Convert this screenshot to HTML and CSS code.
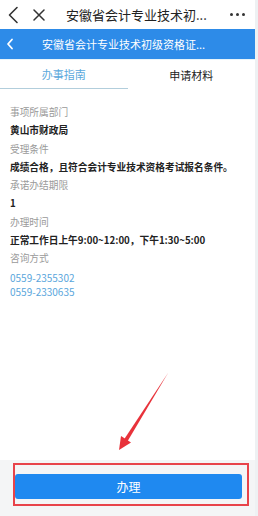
FILE: index.html
```html
<!DOCTYPE html>
<html lang="zh-CN">
<head>
<meta charset="utf-8">
<link rel="stylesheet" href="styles.css">
</head>
<body>
<div class="page">
  <div class="topbar">
    <svg class="ic-back" width="12" height="18" viewBox="0 0 12 18"><path d="M10 1.5 L2.5 9 L10 16.5" fill="none" stroke="#333" stroke-width="1.6" stroke-linecap="round" stroke-linejoin="round"/></svg>
    <svg class="ic-close" width="12" height="12" viewBox="0 0 12 12"><path d="M1 1 L11 11 M11 1 L1 11" fill="none" stroke="#333" stroke-width="1.5" stroke-linecap="round"/></svg>
    <div class="top-title">安徽省会计专业技术初...</div>
    <div class="dots"><span></span><span></span><span></span></div>
  </div>
  <div class="bluebar">
    <svg class="ic-bback" width="8" height="12" viewBox="0 0 8 12"><path d="M6 1.5 L2 6 L6 10.5" fill="none" stroke="#fff" stroke-width="1.8" stroke-linecap="round" stroke-linejoin="round"/></svg>
    <div class="blue-title">安徽省会计专业技术初级资格证...</div>
  </div>
  <div class="tabs">
    <div class="tab active">办事指南</div>
    <div class="tab">申请材料</div>
  </div>
  <div class="content">
    <div class="label">事项所属部门</div>
    <div class="value">黄山市财政局</div>
    <div class="label">受理条件</div>
    <div class="value">成绩合格，且符合会计专业技术资格考试报名条件。</div>
    <div class="label">承诺办结期限</div>
    <div class="value">1</div>
    <div class="label">办理时间</div>
    <div class="value">正常工作日上午9:00~12:00，下午1:30~5:00</div>
    <div class="label">咨询方式</div>
    <div class="phones">
      <div class="phone">0559-2355302</div>
      <div class="phone">0559-2330635</div>
    </div>
  </div>
  <div class="footer">
    <div class="frame">
      <div class="btn">办理</div>
    </div>
  </div>
  <svg class="arrow" width="258" height="516" viewBox="0 0 258 516">
    <path d="M168 373 L123 441 L126.5 443 Z" fill="#e8323a"/>
    <path d="M119 450 L121 436 L131 442.5 Z" fill="#e8323a"/>
  </svg>
</div>
</body>
</html>
```

FILE: styles.css
```css
* { box-sizing: border-box; }
html, body { margin: 0; padding: 0; }
body {
  width: 258px;
  height: 516px;
  overflow: hidden;
  background: #fff;
  font-family: "Noto Sans CJK SC", "Noto Sans", sans-serif;
}
.page {
  position: relative;
  width: 258px;
  height: 516px;
  display: flex;
  flex-direction: column;
  border-right: 3px solid #eef1f3;
}
.topbar {
  height: 29px;
  display: flex;
  align-items: center;
  padding-left: 7px;
  padding-right: 10px;
  background: #fff;
}
.ic-back { flex: none; }
.ic-close { flex: none; margin-left: 14px; }
.top-title {
  flex: 1;
  margin-left: 21px;
  font-size: 13px;
  color: #222;
  white-space: nowrap;
}
.dots { display: flex; gap: 3px; }
.dots span { width: 3px; height: 3px; border-radius: 50%; background: #333; }
.bluebar {
  height: 30px;
  background: #2d8be8;
  display: flex;
  align-items: center;
  padding-left: 6px;
}
.blue-title {
  margin-left: 28px;
  font-size: 11px;
  color: #fff;
  white-space: nowrap;
}
.tabs {
  height: 30px;
  display: flex;
  border-top: 1px solid #e6f4fb;
}
.tab {
  flex: 1;
  display: flex;
  align-items: center;
  justify-content: center;
  font-size: 11px;
  color: #222;
}
.tab.active {
  color: #5aa8dc;
  border-bottom: 1px solid #b2cedc;
}
.content {
  flex: 1;
  padding: 14px 10px 0 10px;
}
.label, .value {
  font-size: 9.7px;
  line-height: 18.3px;
  white-space: nowrap;
}
.label { color: #9a9a9a; }
.value { color: #222; font-weight: 700; }
.phones { padding-top: 3px; }
.phone {
  font-size: 10px;
  line-height: 14px;
  color: #5aa6dc;
}
.footer {
  height: 56px;
  background: #f4f5f6;
  padding: 3px 6px 0 13px;
}
.frame {
  height: 43px;
  border: 2px solid #e8434a;
  padding: 9px 5px 5px 0;
}
.btn {
  height: 100%;
  background: #1f89f0;
  border-radius: 3px;
  display: flex;
  align-items: center;
  justify-content: center;
  color: #fff;
  font-size: 12px;
}
.arrow {
  position: absolute;
  left: 0;
  top: 0;
  pointer-events: none;
}
```
